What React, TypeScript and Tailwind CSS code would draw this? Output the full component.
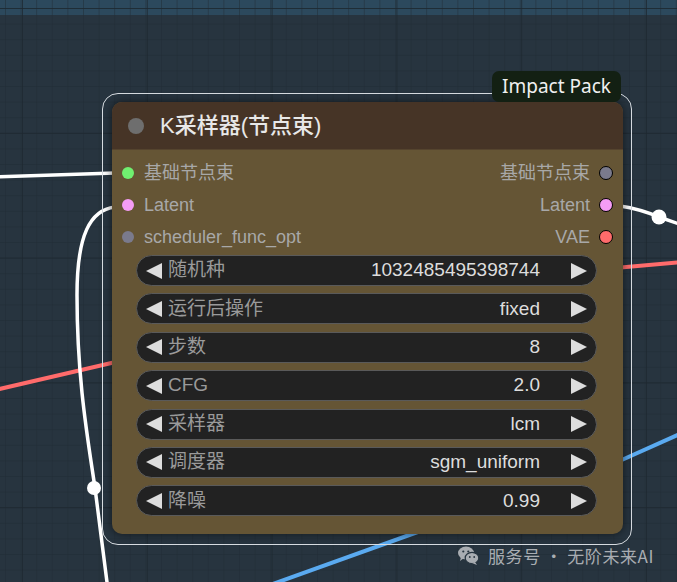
import React from "react";

const latin = "font-['Liberation_Sans','Noto_Sans_CJK_SC',sans-serif]";

const inputs = [
  { name: "基础节点束", color: "bg-[#70f070]" },
  { name: "Latent", color: "bg-[#f59cf5]" },
  { name: "scheduler_func_opt", color: "bg-[#7a7a8c]" },
];

const outputs = [
  { name: "基础节点束", color: "bg-[#7a7a8c]" },
  { name: "Latent", color: "bg-[#f59cf5]" },
  { name: "VAE", color: "bg-[#ff6b6b]" },
];

const widgets = [
  { label: "随机种", value: "1032485495398744" },
  { label: "运行后操作", value: "fixed" },
  { label: "步数", value: "8" },
  { label: "CFG", value: "2.0" },
  { label: "采样器", value: "lcm" },
  { label: "调度器", value: "sgm_uniform" },
  { label: "降噪", value: "0.99" },
];

function Arrow({ dir }: { dir: "left" | "right" }) {
  return (
    <svg width="16" height="16" viewBox="0 0 16 16" className="shrink-0">
      {dir === "left" ? (
        <polygon points="16,0 16,16 0,8" fill="#dddddd" />
      ) : (
        <polygon points="0,0 0,16 16,8" fill="#dddddd" />
      )}
    </svg>
  );
}

function Canvas() {
  // grid + wires drawn on the canvas behind the node
  return (
    <svg
      width="677"
      height="582"
      viewBox="0 0 677 582"
      className="absolute inset-0"
    >
      <defs>
        <pattern id="minor" width="15.6" height="15.6" patternUnits="userSpaceOnUse" x="5" y="8">
          <path d="M15.6 0 L0 0 0 15.6" fill="none" stroke="#202b35" strokeWidth="1" />
        </pattern>
        <pattern id="major" width="124.8" height="124.8" patternUnits="userSpaceOnUse" x="22" y="8">
          <path d="M124.8 0 L0 0 0 124.8" fill="none" stroke="#1d2730" strokeWidth="1.5" />
        </pattern>
      </defs>
      <rect width="677" height="582" fill="#27343f" />
      <rect width="677" height="15" fill="#2c495d" />
      <rect width="677" height="582" fill="url(#minor)" />
      <rect width="677" height="582" fill="url(#major)" />

      {/* red wire */}
      <path d="M-5 390 L120 361" stroke="#ff6b6b" strokeWidth="4" fill="none" />
      <path d="M615 268 L682 262" stroke="#ff6b6b" strokeWidth="4" fill="none" />
      {/* blue wire */}
      <path d="M270 585 L440 524" stroke="#5aaaf0" strokeWidth="4" fill="none" />
      <path d="M615 463 L682 433" stroke="#5aaaf0" strokeWidth="4" fill="none" />
      {/* white wires */}
      <path d="M-5 177 L115 173" stroke="#ffffff" strokeWidth="3.5" fill="none" />
      <path
        d="M115 207 C 90 210, 77 235, 77 295 C 77 380, 88 440, 95 488 L 108 590"
        stroke="#ffffff"
        strokeWidth="3.5"
        fill="none"
      />
      <path d="M620 206 Q 640 209 659 217 L 682 225" stroke="#ffffff" strokeWidth="3.5" fill="none" />
      <circle cx="94" cy="488" r="7" fill="#ffffff" />
      <circle cx="659" cy="217" r="7.5" fill="#ffffff" />
    </svg>
  );
}

function Node() {
  return (
    <div className="absolute left-[112px] top-[102px] w-[511px] h-[432px] rounded-[10px] bg-[#655535] shadow-[0_0_10px_rgba(0,0,0,0.55)] flex flex-col overflow-hidden">
      <div className="h-[48px] shrink-0 bg-[#463426] border-b border-[#55442e] flex items-center pl-[16px] gap-4">
        <span className="w-[16px] h-[16px] rounded-full bg-[#6e6e6e]" />
        <span className={`${latin} text-[22px] text-[#e8e8e8] font-medium`}>K采样器(节点束)</span>
      </div>

      <div className={`${latin} flex pt-[7px] text-[18px] text-[#a8a8a8]`}>
        <div className="flex-1 flex flex-col">
          {inputs.map((s) => (
            <div key={s.name} className="h-8 flex items-center pl-[10px] gap-[10px]">
              <span className={`w-[12px] h-[12px] rounded-full ${s.color}`} />
              <span>{s.name}</span>
            </div>
          ))}
        </div>
        <div className="flex flex-col items-end">
          {outputs.map((s) => (
            <div key={s.name} className="h-8 flex items-center pr-[10px] gap-[9px]">
              <span>{s.name}</span>
              <span className={`w-[14px] h-[14px] rounded-full border-[1.5px] border-black ${s.color}`} />
            </div>
          ))}
        </div>
      </div>

      <div className={`${latin} flex flex-col gap-[7.4px] mt-[2px] pl-[24px] pr-[26px] text-[19px]`}>
        {widgets.map((w) => (
          <div
            key={w.label}
            className="h-[31px] rounded-full bg-[#222222] border border-[#5a5a5a] flex items-center pl-[9px] pr-[9px]"
          >
            <Arrow dir="left" />
            <span className="ml-[6px] text-[#9a9a9a]">{w.label}</span>
            <span className="flex-1" />
            <span className="text-[#dddddd]">{w.value}</span>
            <span className="w-[31px]" />
            <Arrow dir="right" />
          </div>
        ))}
      </div>
    </div>
  );
}

function WeChatIcon() {
  return (
    <svg width="21" height="19" viewBox="0 0 21 19">
      <ellipse cx="8" cy="7" rx="8" ry="6.5" fill="#a9adb2" />
      <path d="M3 11 L2 15 L6 12 Z" fill="#a9adb2" />
      <ellipse cx="14" cy="12" rx="6.8" ry="5.6" fill="#a9adb2" stroke="#27343f" strokeWidth="1.2" />
      <path d="M17 16 L19 19 L14 17 Z" fill="#a9adb2" />
      <circle cx="5.3" cy="5.5" r="1.1" fill="#27343f" />
      <circle cx="10.3" cy="5.5" r="1.1" fill="#27343f" />
      <circle cx="11.8" cy="11" r="0.9" fill="#27343f" />
      <circle cx="16.2" cy="11" r="0.9" fill="#27343f" />
    </svg>
  );
}

export default function App() {
  return (
    <div className="relative w-[677px] h-[582px] overflow-hidden bg-[#27343f]">
      <Canvas />

      {/* selection outline */}
      <div className="absolute left-[102px] top-[93px] w-[530px] h-[452px] rounded-[16px] border-[1.5px] border-[#d8dde2]" />

      <Node />

      <div className="absolute left-[492px] top-[71px] w-[129px] h-[31px] rounded-[7px] bg-[#132013] flex items-center justify-center">
        <span className="font-['Noto_Sans',sans-serif] text-[19px] text-[#f0f0f0] leading-none">Impact Pack</span>
      </div>

      <div className="absolute left-[458px] top-[543px] flex items-center gap-[9px]">
        <WeChatIcon />
        <span className="font-['Noto_Sans_CJK_SC','Liberation_Sans',sans-serif] text-[17px] text-[#a9adb2] tracking-[0.6px]">
          服务号 · 无阶未来AI
        </span>
      </div>
    </div>
  );
}
